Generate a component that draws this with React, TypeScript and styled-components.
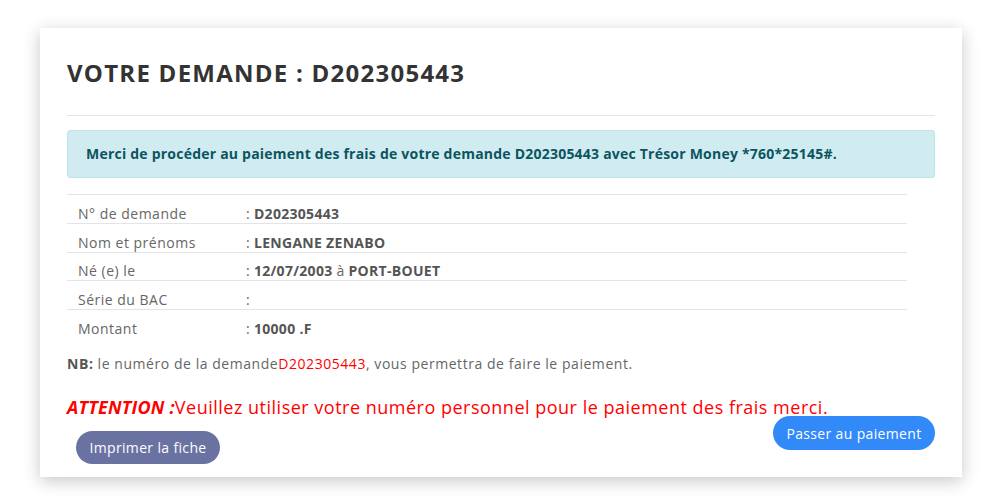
import styled, {createGlobalStyle} from "styled-components";

const GlobalStyle = createGlobalStyle`
  body {
    margin: 0;
    background: #ffffff;
    font-family: "Open Sans", "Noto Sans", sans-serif;
  }
`;

const Page = styled.div`
  padding: 28px 19px 25px 40px;
`;

const Card = styled.div`
  width: 922px;
  background: #ffffff;
  box-shadow: 0 4px 16px rgba(0, 0, 0, 0.22);
  padding: 27px 27px 13px 27px;
  box-sizing: border-box;
`;

const Title = styled.h2`
  margin: 3px 0 0 0;
  font-size: 24px;
  font-weight: 700;
  color: #333333;
  line-height: 30px;
  letter-spacing: 1.25px;
`;

const Divider = styled.hr`
  border: 0;
  border-top: 1px solid #e3e3e8;
  margin: 27px 0 14px 0;
`;

const Alert = styled.div`
  background: #d1ecf1;
  border: 1px solid #bee5eb;
  border-radius: 3px;
  color: #0c5460;
  font-weight: 700;
  font-size: 14px;
  letter-spacing: 0.22px;
  padding: 15px 18px;
  line-height: 16px;
`;

const InfoTable = styled.table`
  width: 840px;
  margin-top: 16px;
  border-collapse: collapse;
  font-size: 14px;
  letter-spacing: 0.5px;
  color: #666666;
`;

const Row = styled.tr`
  border-top: 1px solid #e3e3e8;
  height: 28.75px;
`;

const Cell = styled.td`
  padding: 0;
  line-height: 19px;
  vertical-align: bottom;
`;

const Label = styled(Cell)`
  width: 168px;
  padding-left: 11px;
`;

const Value = styled(Cell)`
  letter-spacing: 0.3px;
  b {
    font-weight: 700;
    color: #555555;
  }
`;

const Note = styled.p`
  margin: 16px 0 0 0;
  font-size: 14px;
  line-height: 19px;
  letter-spacing: 0.55px;
  color: #666666;
  b {
    color: #555555;
  }
`;

const Red = styled.span`
  color: #ff0000;
`;

const Attention = styled.p`
  margin: 22px 0 0 0;
  font-size: 18px;
  line-height: 24px;
  letter-spacing: 0.5px;
  color: #ff0000;
  b {
    font-style: italic;
    font-weight: 700;
    letter-spacing: 0.2px;
  }
`;

const Actions = styled.div`
  display: flex;
  justify-content: space-between;
  align-items: flex-start;
  padding-left: 9px;
  margin-top: -3px;
`;

const Button = styled.button<{$primary?: boolean}>`
  border: 0;
  border-radius: 17px;
  height: ${(p) => (p.$primary ? "34px" : "33px")};
  width: ${(p) => (p.$primary ? "162px" : "144px")};
  padding: 0;
  font-family: inherit;
  font-size: 14px;
  letter-spacing: 0.35px;
  color: #ffffff;
  background: ${(p) => (p.$primary ? "#3289f8" : "#6a72a2")};
  margin-top: ${(p) => (p.$primary ? "0" : "15px")};
`;

const rows: [string, React.ReactNode][] = [
  ["N° de demande", <b>D202305443</b>],
  ["Nom et prénoms", <b>LENGANE ZENABO</b>],
  ["Né (e) le", <><b>12/07/2003</b> à <b>PORT-BOUET</b></>],
  ["Série du BAC", null],
  ["Montant", <b>10000 .F</b>],
];

function App() {
  return (
    <Page>
      <GlobalStyle />
      <Card>
        <Title>VOTRE DEMANDE : D202305443</Title>
        <Divider />
        <Alert>
          Merci de procéder au paiement des frais de votre demande D202305443 avec Trésor Money *760*25145#.
        </Alert>
        <InfoTable>
          <tbody>
            {rows.map(([label, value]) => (
              <Row key={label}>
                <Label>{label}</Label>
                <Value>: {value}</Value>
              </Row>
            ))}
          </tbody>
        </InfoTable>
        <Note>
          <b>NB:</b> le numéro de la demande<Red>D202305443</Red>, vous permettra de faire le paiement.
        </Note>
        <Attention>
          <b>ATTENTION :</b>Veuillez utiliser votre numéro personnel pour le paiement des frais merci.
        </Attention>
        <Actions>
          <Button>Imprimer la fiche</Button>
          <Button $primary>Passer au paiement</Button>
        </Actions>
      </Card>
    </Page>
  );
}

export default App;
